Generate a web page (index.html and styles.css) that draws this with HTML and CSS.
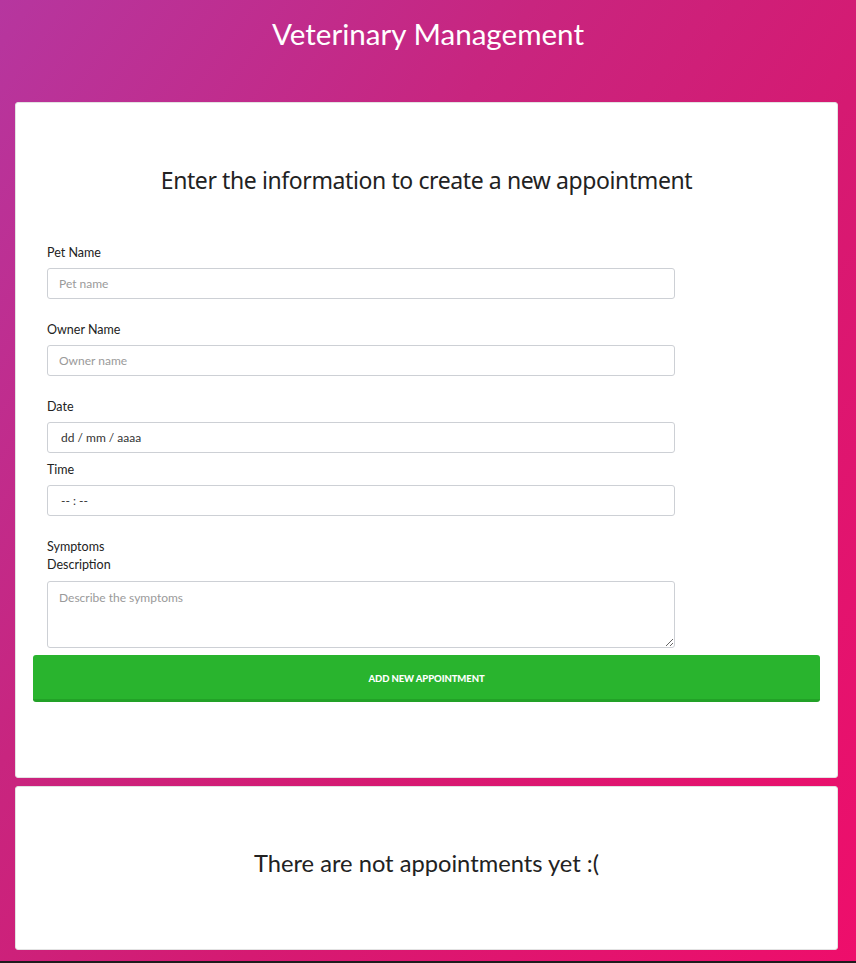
FILE: index.html
```html
<!DOCTYPE html>
<html lang="en">
<head>
<meta charset="utf-8">
<title>Veterinary Management</title>
<link rel="stylesheet" href="styles.css">
</head>
<body>
<div class="page">
  <header class="header">
    <h1 class="title">Veterinary Management</h1>
  </header>
  <main class="content">
    <section class="card card-form">
      <h2 class="form-title">Enter the information to create a new appointment</h2>
      <form class="form">
        <div class="field">
          <label class="label">Pet Name</label>
          <input class="input" type="text" placeholder="Pet name">
        </div>
        <div class="field">
          <label class="label">Owner Name</label>
          <input class="input" type="text" placeholder="Owner name">
        </div>
        <div class="field field-tight">
          <label class="label">Date</label>
          <input class="input input-fake" type="text" value="dd / mm / aaaa" readonly>
        </div>
        <div class="field">
          <label class="label">Time</label>
          <input class="input input-fake" type="text" value="-- : --" readonly>
        </div>
        <div class="field field-area">
          <label class="label label-wrap">Symptoms<br>Description</label>
          <textarea class="input textarea" placeholder="Describe the symptoms"></textarea>
        </div>
      </form>
      <button class="btn" type="button">ADD NEW APPOINTMENT</button>
    </section>
    <section class="card card-empty">
      <h2 class="empty-title">There are not appointments yet :(</h2>
    </section>
  </main>
</div>
</body>
</html>
```
FILE: styles.css
```css
html {
  background: #1f1b1d;
}
body {
  margin: 0;
  font-family: Lato, "Liberation Sans", sans-serif;
}
.page {
  height: 961px;
  background: linear-gradient(125deg, #b6369f 0%, #c8257f 35%, #d51a72 60%, #ee0e6b 100%);
  overflow: hidden;
}
.header {
  height: 102px;
  display: flex;
  justify-content: center;
}
.title {
  margin: 16px 0 0;
  font-weight: 400;
  font-size: 29.6px;
  line-height: 36px;
  color: #fff;
}
.content {
  margin: 0 18px 0 15px;
  display: flex;
  flex-direction: column;
  gap: 8px;
}
.card {
  background: #fff;
  border-radius: 3px;
  border: 1px solid #e2e2e2;
  box-sizing: border-box;
}
.card-form {
  height: 676px;
  padding: 0 17px;
}
.form-title {
  margin: 62px 0 0;
  text-align: center;
  font-weight: 400;
  font-size: 23px;
  line-height: 30px;
  color: #222;
  font-family: "Noto Sans", sans-serif;
  letter-spacing: -0.4px;
}
.form {
  padding: 49px 0 0 14px;
  display: flex;
  flex-direction: column;
}
.field {
  display: flex;
  flex-direction: column;
  margin-bottom: 22px;
}
.field-tight {
  margin-bottom: 8px;
}
.field-area {
  margin-bottom: 7px;
}
.label {
  font-size: 12.5px;
  line-height: 18px;
  color: #222;
  margin-bottom: 6px;
}
.input {
  width: 628px;
  height: 31px;
  box-sizing: border-box;
  border: 1px solid #cdd0d5;
  border-radius: 3px;
  padding: 0 11px;
  font-family: Lato, sans-serif;
  font-size: 12px;
  color: #333;
  background: #fff;
  outline: none;
}
.input::placeholder {
  color: #9a9a9a;
}
.input-fake {
  padding-left: 13px;
  color: #333;
}
.textarea {
  height: 67px;
  padding: 8px 11px;
  resize: vertical;
}
.label-wrap {
  margin-bottom: 7px;
}
.btn {
  display: block;
  width: 100%;
  height: 47px;
  margin-top: 0;
  background: #29b42e;
  border: none;
  border-bottom: 3px solid #22a127;
  border-radius: 3px;
  color: #fff;
  font-family: Lato, sans-serif;
  font-weight: 900;
  font-size: 9.5px;
  letter-spacing: -0.1px;
  padding-top: 3px;
}
.card-empty {
  height: 164px;
  display: flex;
  align-items: center;
  justify-content: center;
}
.empty-title {
  margin: 0;
  font-weight: 400;
  font-size: 23.7px;
  color: #222;
  padding-bottom: 10px;
}
```
